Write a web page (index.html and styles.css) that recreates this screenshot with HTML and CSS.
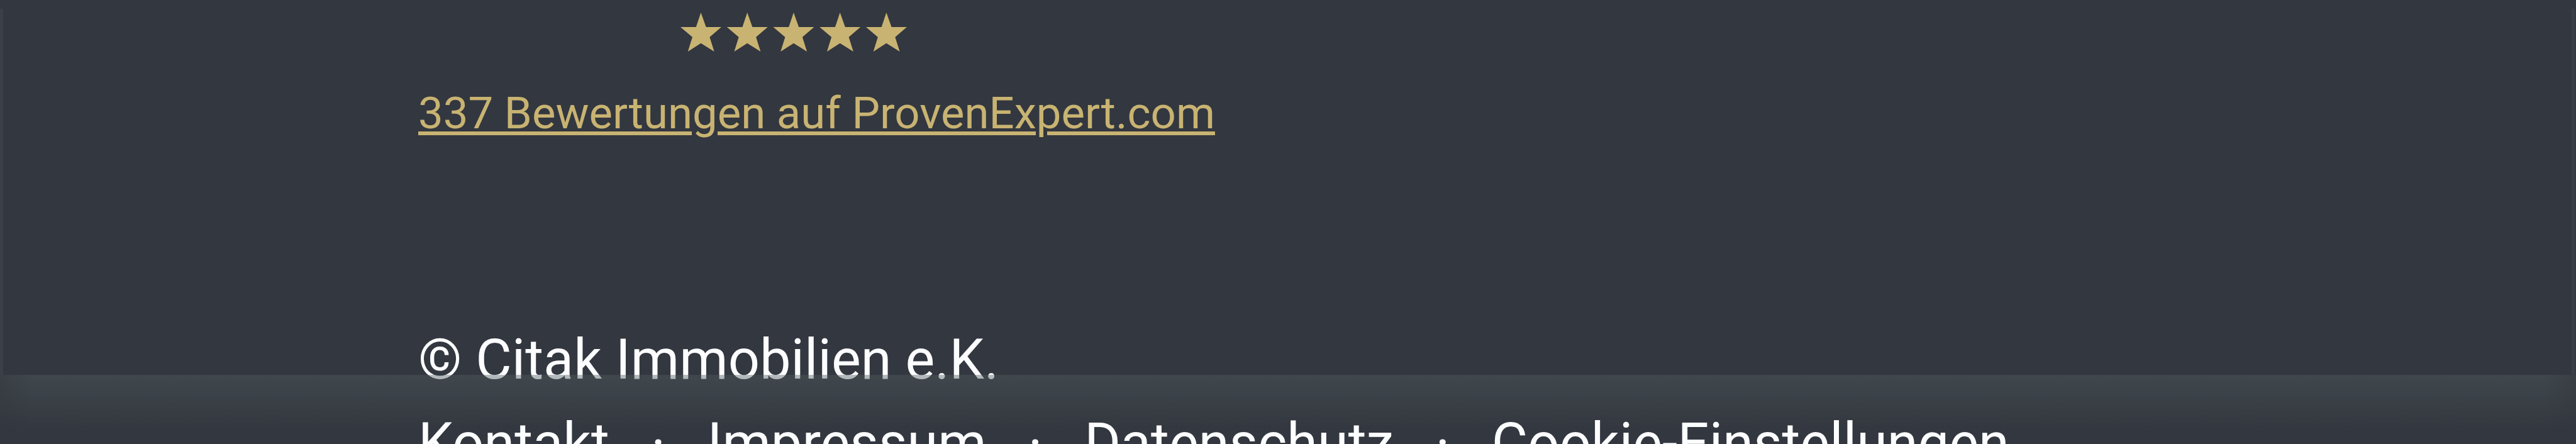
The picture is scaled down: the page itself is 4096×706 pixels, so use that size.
FILE: index.html
```html
<!DOCTYPE html>
<html lang="de">
<head>
<meta charset="utf-8">
<title>Citak Immobilien e.K.</title>
<link rel="stylesheet" href="styles.css">
</head>
<body>
<footer class="footer">
  <section class="rating">
    <svg class="stars" viewBox="0 0 407.2 70" role="img" aria-label="5 Sterne">
      <defs><path id="star" d="M36.7 0L46 26H73.5L52.5 44L60.7 70L36.7 55L13.3 70L21.4 44L0 26H28Z"/></defs>
      <use href="#star"/><use href="#star" x="83.4"/><use href="#star" x="166.8"/><use href="#star" x="250.2"/><use href="#star" x="333.6"/>
    </svg>
    <a class="reviews" href="#">337 Bewertungen auf ProvenExpert.com</a>
  </section>
  <p class="copyright">© Citak Immobilien e.K.</p>
  <nav class="legal">
    <a class="link" href="#">Kontakt</a><span class="dot">·</span><a class="link" href="#">Impressum</a><span class="dot">·</span><a class="link" href="#">Datenschutz</a><span class="dot">·</span><a class="link" href="#">Cookie-Einstellungen</a>
  </nav>
  <div class="sheen"></div>
</footer>
</body>
</html>
```
FILE: styles.css
```css
body { margin: 0; }
.footer {
  position: relative;
  box-sizing: border-box;
  width: 4096px;
  height: 706px;
  padding: 20px 665px 0;
  overflow: hidden;
  background: #33373f;
  color: #fcfdff;
  font-family: Roboto, sans-serif;
  font-size: 88.3px;
  line-height: 132.6px;
}
.footer::before {
  content: "";
  position: absolute;
  inset: 14px 2px 110px 0;
  border: solid #3b4048;
  border-width: 0 5px;
}
.rating {
  display: flex;
  flex-direction: column;
  align-items: center;
  width: 1267px;
  height: 486px;
}
.stars {
  flex: none;
  width: 360px;
  height: 62px;
  margin-right: 74px;
  fill: #c8b372;
}
.reviews {
  margin-top: 45px;
  color: #c8b372;
  font-size: 70.74px;
  line-height: 106px;
  white-space: nowrap;
  text-decoration-thickness: 6px;
  text-underline-offset: 5px;
}
.copyright { margin: 0; }
.legal {
  position: relative;
  z-index: 2;
  display: flex;
  white-space: nowrap;
}
.link { color: inherit; text-decoration: none; }
.dot { width: 155.5px; text-align: center; }
.sheen {
  position: absolute;
  z-index: 1;
  inset: 596px 0 0;
  background: linear-gradient(rgba(81, 92, 95, .4), rgba(81, 92, 95, .43) 4px, rgba(81, 92, 95, .26) 38px, rgba(81, 92, 95, 0) 90px);
  mask-image: linear-gradient(90deg, rgba(0, 0, 0, .5), #000 50px, #000 4046px, rgba(0, 0, 0, .5));
}
```
